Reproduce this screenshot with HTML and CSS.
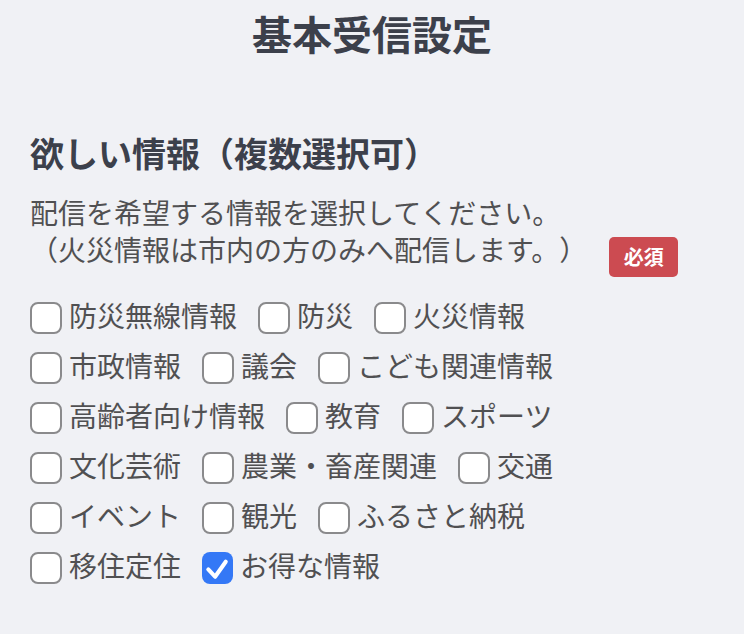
FILE: index.html
```html
<!DOCTYPE html>
<html lang="ja">
<head>
<meta charset="utf-8">
<title>基本受信設定</title>
<link rel="stylesheet" href="styles.css">
</head>
<body>
<main class="page">
  <h1 class="title">基本受信設定</h1>
  <section class="field">
    <h2 class="field-label">欲しい情報（複数選択可）</h2>
    <p class="field-desc">配信を希望する情報を選択してください。<br>（火災情報は市内の方のみへ配信します。）<span class="badge">必須</span></p>
    <div class="options">
      <label class="option"><span class="box"></span><span class="option-text">防災無線情報</span></label>
      <label class="option"><span class="box"></span><span class="option-text">防災</span></label>
      <label class="option"><span class="box"></span><span class="option-text">火災情報</span></label>
      <label class="option"><span class="box"></span><span class="option-text">市政情報</span></label>
      <label class="option"><span class="box"></span><span class="option-text">議会</span></label>
      <label class="option"><span class="box"></span><span class="option-text">こども関連情報</span></label>
      <label class="option"><span class="box"></span><span class="option-text">高齢者向け情報</span></label>
      <label class="option"><span class="box"></span><span class="option-text">教育</span></label>
      <label class="option"><span class="box"></span><span class="option-text">スポーツ</span></label>
      <label class="option"><span class="box"></span><span class="option-text">文化芸術</span></label>
      <label class="option"><span class="box"></span><span class="option-text">農業・畜産関連</span></label>
      <label class="option"><span class="box"></span><span class="option-text">交通</span></label>
      <label class="option"><span class="box"></span><span class="option-text">イベント</span></label>
      <label class="option"><span class="box"></span><span class="option-text">観光</span></label>
      <label class="option"><span class="box"></span><span class="option-text">ふるさと納税</span></label>
      <label class="option"><span class="box"></span><span class="option-text">移住定住</span></label>
      <label class="option"><span class="box box-checked"><svg class="check" viewBox="0 0 32 32" width="32" height="32"><path d="M6.5 17.5 L13.5 25 L24.5 9.5" fill="none" stroke="#fff" stroke-width="4.2" stroke-linecap="round" stroke-linejoin="round"/></svg></span><span class="option-text">お得な情報</span></label>
    </div>
  </section>
</main>
</body>
</html>
```

FILE: styles.css
```css
html, body {
  margin: 0;
  padding: 0;
  background: #f0f1f5;
}

body {
  font-family: "Noto Sans CJK JP", "Noto Sans", sans-serif;
  color: #4d4d4f;
  text-spacing-trim: space-all;
}

.page {
  padding: 9px 30px 20px;
}

.title {
  margin: 0;
  font-size: 40px;
  line-height: 48px;
  font-weight: 700;
  text-align: center;
  color: #3c404b;
}

.field-label {
  margin: 76px 0 0;
  font-size: 34px;
  line-height: 40px;
  font-weight: 700;
  color: #3c404b;
}

.field-desc {
  margin: 21px 0 0;
  font-size: 28px;
  line-height: 37px;
  color: #505052;
}

.badge {
  display: inline-block;
  margin: -4px 0 -12px 22px;
  width: 69px;
  height: 40px;
  line-height: 40px;
  text-align: center;
  border-radius: 5px;
  background: #cc4b51;
  color: #fff;
  font-size: 20px;
  font-weight: 700;
  vertical-align: middle;
}

.options {
  margin-top: 25px;
  max-width: 620px;
  display: flex;
  flex-wrap: wrap;
  column-gap: 21px;
}

.option {
  display: flex;
  align-items: center;
  height: 50px;
}

.box {
  box-sizing: border-box;
  width: 32px;
  height: 32px;
  border: 2px solid #8a8a8c;
  border-radius: 8px;
  background: #fff;
  margin-right: 7px;
  display: flex;
  align-items: center;
  justify-content: center;
}

.box-checked {
  border: none;
  background: #3478f6;
  width: 31px;
}

.check {
  display: block;
}

.option-text {
  font-size: 28px;
  line-height: 32px;
  margin-bottom: 6px;
  color: #505052;
}
```
